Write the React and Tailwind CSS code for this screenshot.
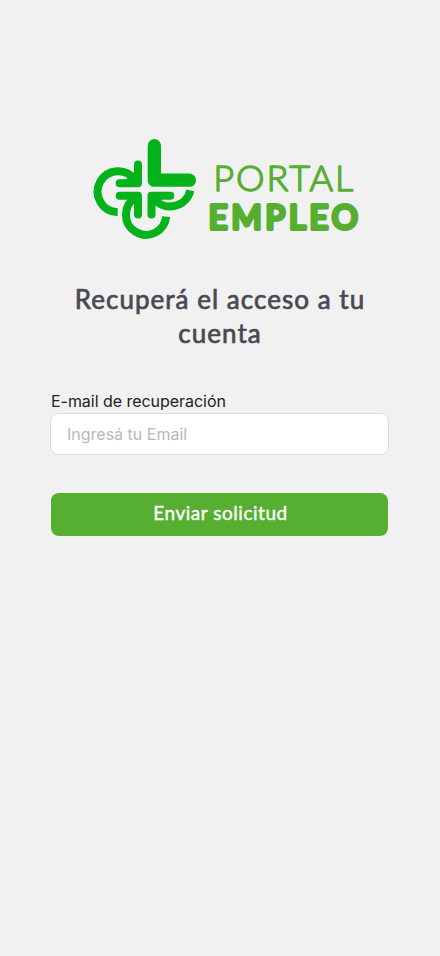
function LogoMark() {
  return (
    <svg className="size-[120px] shrink-0" viewBox="0 0 360 360" fill="none" stroke="#04b31a" strokeWidth="24">
      <path d="M211 47V150.500H316" strokeWidth="40" strokeLinecap="round" strokeLinejoin="round" />
      <path d="M162 103.500V160H107M107 197H162V253.500M259 197H202.500V253.500" strokeLinecap="round" strokeLinejoin="round" />
      <path d="M101 246.500A61.500 61.500 0 1 1 153 150" />
      <path d="M246.500 260A60.500 60 0 1 1 155 203" />
      <path d="M319 181A62 61 0 0 1 209 205" />
      <path d="M125 150H162V128H146ZM128 207H162V222H145ZM203 200H222L234 208L216 222H203Z" fill="#04b31a" stroke="none" />
    </svg>
  );
}

function LogoName() {
  return (
    <svg className="h-[90px] w-[170px] shrink-0 font-['Lato',sans-serif]" viewBox="0 0 170 90" fill="#56af31" stroke="#56af31" strokeLinejoin="round">
      <text x="13.300" y="41.300" fontSize="36" fontWeight="300" strokeWidth="1.400" textLength="140" lengthAdjust="spacing">PORTAL</text>
      <text x="8.700" y="78.600" fontSize="32.500" fontWeight="400" strokeWidth="4" textLength="149" lengthAdjust="spacing">EMPLEO</text>
    </svg>
  );
}

export default function App() {
  return (
    <main className="flex min-h-screen flex-col bg-[#f1f1f1] pt-[130px] pr-[52px] pl-[51px] font-['Inter',sans-serif]">
      <div className="-mx-[18px] flex items-start pl-[51px]">
        <LogoMark />
        <div className="-ml-1 pt-5">
          <LogoName />
        </div>
      </div>
      <h1 className="mt-8 text-center font-['Lato',sans-serif] text-[26px] leading-[34px] font-normal tracking-[1.03px] text-[#494853] [-webkit-text-stroke:0.7px_#494853]">
        <span className="-mr-px block whitespace-nowrap">Recuperá el acceso a tu</span>
        <span className="-mr-px block">cuenta</span>
      </h1>
      <form className="mt-[39px] flex flex-col" onSubmit={(e) => e.preventDefault()}>
        <label htmlFor="email" className="text-base leading-6 tracking-[-0.04px] text-[#222222]">E-mail de recuperación</label>
        <input
          id="email"
          type="email"
          placeholder="Ingresá tu Email"
          className="-mr-px -ml-px h-[42px] rounded-lg border border-[#dcdcdc] bg-white px-4 text-base placeholder:text-[#b8b8b8]"
        />
        <button type="submit" className="mt-[38px] h-[43px] rounded-lg bg-[#56af31] pb-0.5 pl-0.5 font-['Lato',sans-serif] text-[19px] font-normal tracking-[0.53px] text-white [-webkit-text-stroke:0.4px_white]">
          Enviar solicitud
        </button>
      </form>
    </main>
  );
}
